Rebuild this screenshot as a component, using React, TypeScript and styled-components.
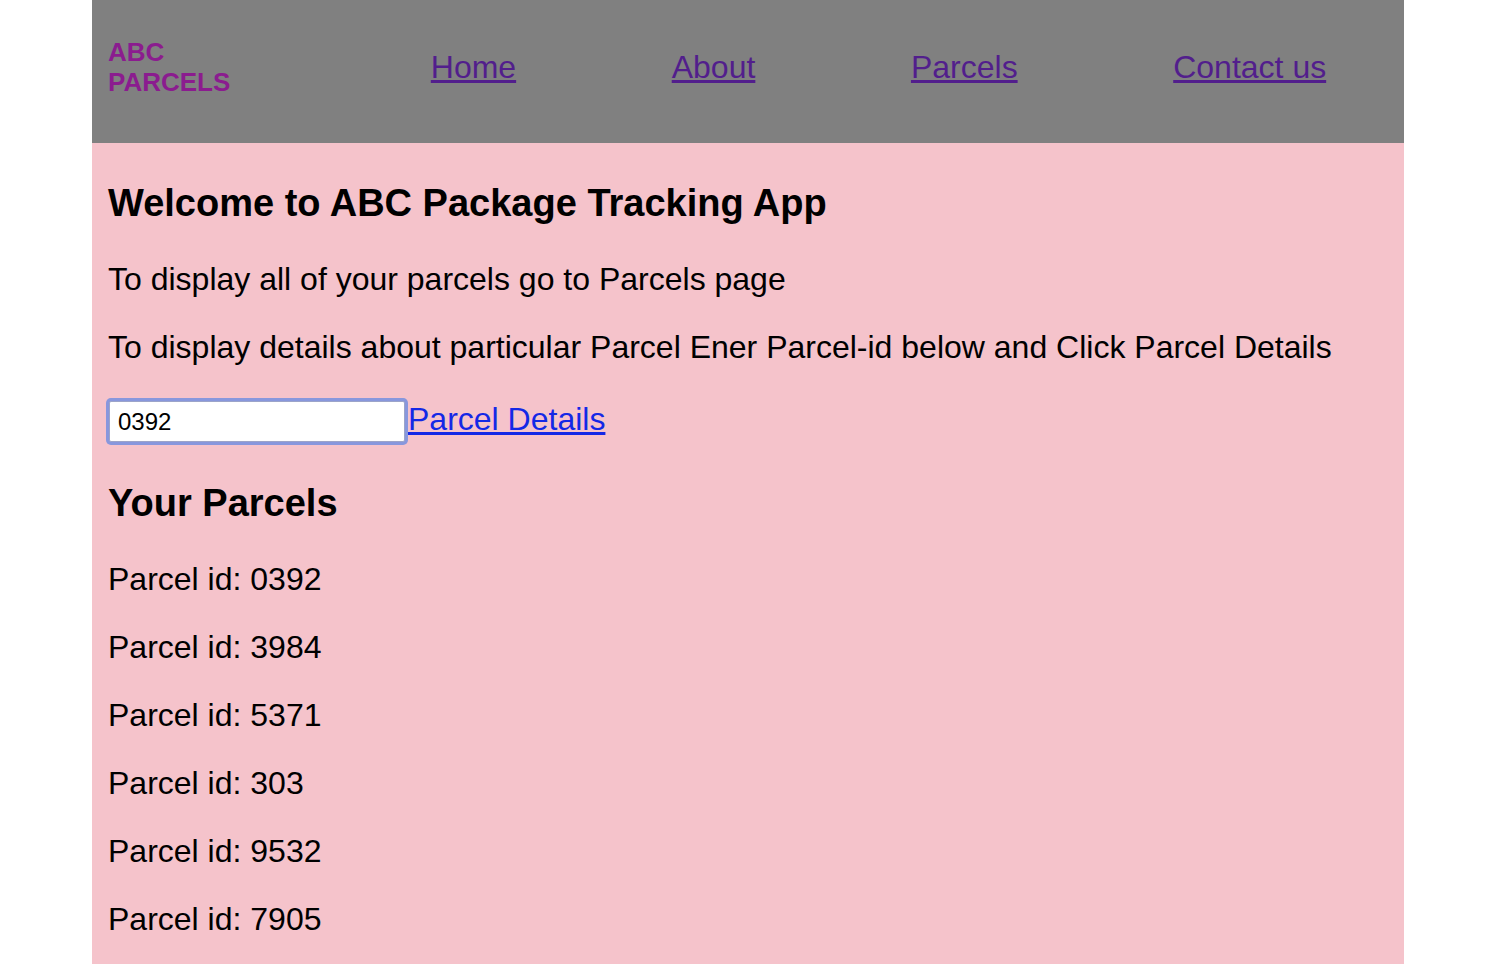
import React from 'react';
import styled, { createGlobalStyle } from 'styled-components';

const GlobalStyle = createGlobalStyle`
  html, body {
    margin: 0;
    padding: 0;
    background: #ffffff;
  }
  body {
    font-family: "Liberation Sans", Arial, Helvetica, sans-serif;
    color: #000000;
  }
`;

const parcels = ['0392', '3984', '5371', '303', '9532', '7905'];

const navLinks = ['Home', 'About', 'Parcels', 'Contact us'];

const App: React.FC = () => {
  return (
    <>
      <GlobalStyle />
      <Page>
        <Header>
          <Logo>
            ABC
            <br />
            PARCELS
          </Logo>
          <Nav>
            {navLinks.map((label) => (
              <NavLink key={label} href="#">
                {label}
              </NavLink>
            ))}
          </Nav>
        </Header>

        <Main>
          <Heading>Welcome to ABC Package Tracking App</Heading>
          <Text>To display all of your parcels go to Parcels page</Text>
          <Text>To display details about particular Parcel Ener Parcel-id below and Click Parcel Details</Text>
          <SearchRow>
            <ParcelInput type="text" defaultValue="0392" />
            <DetailsLink href="#">Parcel Details</DetailsLink>
          </SearchRow>

          <Heading>Your Parcels</Heading>
          {parcels.map((id) => (
            <Text key={id}>Parcel id: {id}</Text>
          ))}
        </Main>
      </Page>
    </>
  );
};

const Page = styled.div`
  width: 1312px;
  margin-left: 92px;
  min-height: 964px;
  background: #f5c3cb;
`;

const Header = styled.header`
  display: flex;
  align-items: center;
  height: 134px;
  padding: 0 0 9px 16px;
  background: #808080;
`;

const Logo = styled.div`
  width: 245px;
  font-size: 26px;
  line-height: 30px;
  font-weight: bold;
  color: #8b1c8f;
`;

const Nav = styled.nav`
  flex: 1;
  display: flex;
  justify-content: space-around;
`;

const NavLink = styled.a`
  font-size: 32px;
  color: #521e8c;
  text-decoration: underline;
`;

const Main = styled.main`
  display: flow-root;
  padding: 2.5px 16px 0;
`;

const Heading = styled.h3`
  font-size: 38px;
  line-height: 41.5px;
  font-weight: bold;
  margin: 37.44px 0 36.44px;
`;

const Text = styled.p`
  font-size: 32px;
  line-height: 36px;
  margin: 32px 0;
`;

const SearchRow = styled.div`
  display: flex;
  align-items: flex-start;
  padding: 4px 0 4px 0;
`;

const ParcelInput = styled.input`
  box-sizing: border-box;
  width: 296px;
  height: 41px;
  margin-left: 1px;
  padding: 2px 8px 0;
  border: 1px solid #9ca4c9;
  border-radius: 2px;
  box-shadow: 0 0 0 3px #8897dd;
  background: #ffffff;
  font-family: "Liberation Sans", Arial, sans-serif;
  font-size: 24px;
  color: #000000;
  outline: none;
`;

const DetailsLink = styled.a`
  margin-left: 3px;
  font-size: 32px;
  line-height: 37px;
  color: #1428e6;
  text-decoration: underline;
`;

export default App;
